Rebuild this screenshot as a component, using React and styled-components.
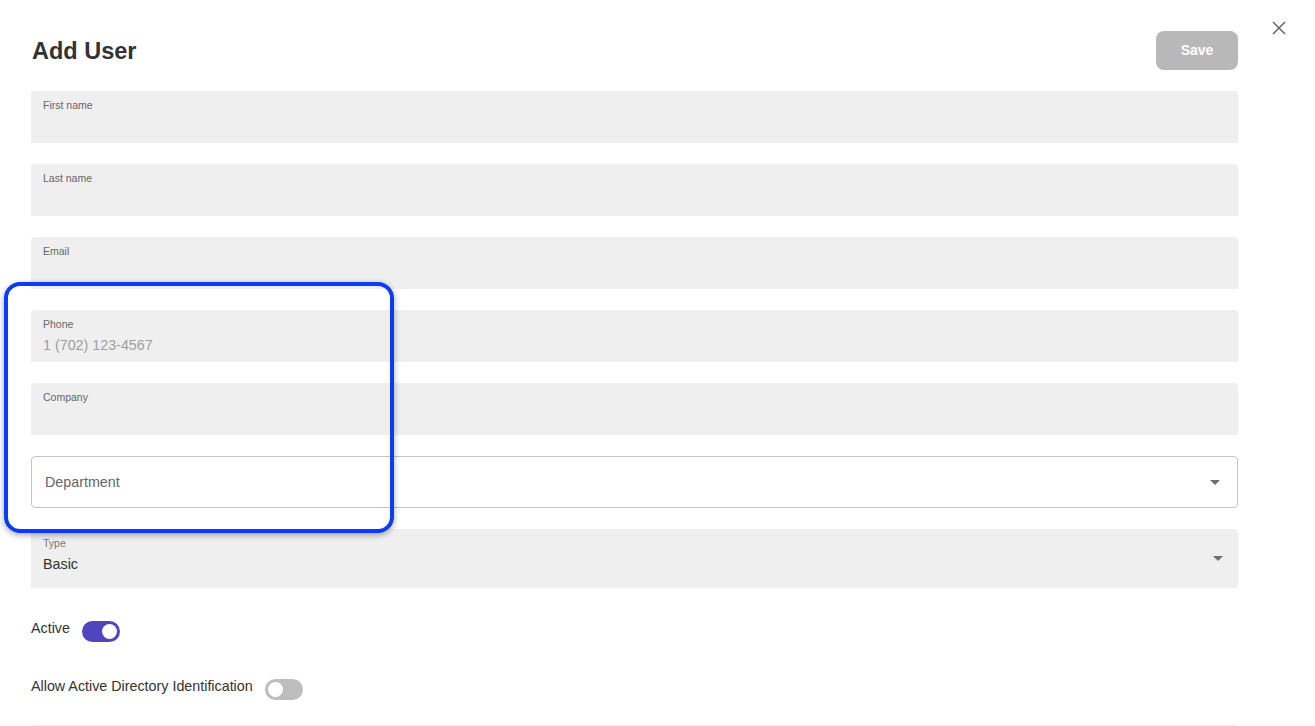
import React, { useState } from 'react'
import styled, { createGlobalStyle } from 'styled-components'

const GlobalStyle = createGlobalStyle`
  body {
    margin: 0;
    background: #fff;
    font-family: "Liberation Sans", Arial, sans-serif;
    color: #333;
  }
`

const fields = [
  { label: 'First name' },
  { label: 'Last name' },
  { label: 'Email' },
  { label: 'Phone', placeholder: '1 (702) 123-4567' },
  { label: 'Company' },
]

export default function App() {
  const [active, setActive] = useState(true)
  const [adAllowed, setAdAllowed] = useState(false)

  return (
    <>
      <GlobalStyle />
      <PageStyled>
        <FormStyled>
          <HeaderStyled>
            <TitleStyled>Add User</TitleStyled>
            <SaveButton disabled>Save</SaveButton>
          </HeaderStyled>
          <FieldListStyled>
            {fields.map((field) => (
              <FilledField key={field.label}>
                <FieldLabel>{field.label}</FieldLabel>
                <FieldValue $placeholder={!!field.placeholder}>
                  {field.placeholder || ''}
                </FieldValue>
              </FilledField>
            ))}
            <OutlinedSelect>
              <span>Department</span>
              <Caret />
            </OutlinedSelect>
            <FilledSelect>
              <SelectText>
                <SelectLabel>Type</SelectLabel>
                <SelectValue>Basic</SelectValue>
              </SelectText>
              <Caret />
            </FilledSelect>
          </FieldListStyled>
          <ToggleRow $top={33}>
            <ToggleText>Active</ToggleText>
            <Toggle $on={active} onClick={() => setActive(!active)} />
          </ToggleRow>
          <ToggleRow $top={37}>
            <ToggleText>Allow Active Directory Identification</ToggleText>
            <Toggle $on={adAllowed} onClick={() => setAdAllowed(!adAllowed)} />
          </ToggleRow>
          <Divider />
        </FormStyled>
        <CloseButton aria-label="Close">
          <svg width="14" height="14" viewBox="0 0 14 14">
            <path d="M1 1 L13 13 M13 1 L1 13" stroke="#6b6b6b" strokeWidth="1.6" />
          </svg>
        </CloseButton>
        <Highlight />
      </PageStyled>
    </>
  )
}

function Caret() {
  return (
    <svg width="10" height="5" viewBox="0 0 10 5">
      <path d="M0 0 L10 0 L5 5 Z" fill="#6e6e6e" />
    </svg>
  )
}

const PageStyled = styled.div`
  position: relative;
  display: flex;
  align-items: flex-start;
  padding-left: 31px;
  width: 1315px;
  height: 726px;
  box-sizing: border-box;
  overflow: hidden;
`

const FormStyled = styled.div`
  width: 1207px;
  padding-top: 31px;
`

const HeaderStyled = styled.div`
  display: flex;
  justify-content: space-between;
  align-items: center;
  height: 39px;
  margin-bottom: 21px;
`

const TitleStyled = styled.h1`
  margin: 2px 0 0 1px;
  font-size: 23.5px;
  font-weight: bold;
  color: #333;
`

const SaveButton = styled.button`
  width: 82px;
  height: 39px;
  border: none;
  border-radius: 8px;
  background: #b8b8b8;
  color: #fff;
  font-family: inherit;
  font-size: 14px;
  font-weight: bold;
  padding-bottom: 2px;
`

const FieldListStyled = styled.div`
  display: flex;
  flex-direction: column;
  gap: 21px;
`

const FilledField = styled.div`
  height: 52px;
  box-sizing: border-box;
  padding: 8px 12px 0;
  background: #efefef;
  border-radius: 4px 4px 0 0;
`

const FieldLabel = styled.div`
  font-size: 10.5px;
  line-height: 13px;
  color: #666;
`

const FieldValue = styled.div`
  margin-top: 5px;
  font-size: 14.3px;
  line-height: 18px;
  color: ${(p) => (p.$placeholder ? '#9e9e9e' : '#333')};
`

const OutlinedSelect = styled.div`
  height: 52px;
  box-sizing: border-box;
  display: flex;
  align-items: center;
  justify-content: space-between;
  padding: 0 17px 0 13px;
  border: 1px solid #c4c4c4;
  border-radius: 4px;
  font-size: 14.3px;
  color: #666;
`

const FilledSelect = styled.div`
  height: 59px;
  box-sizing: border-box;
  display: flex;
  align-items: center;
  justify-content: space-between;
  padding: 0 15px 0 12px;
  background: #efefef;
  border-radius: 4px 4px 0 0;
`

const SelectText = styled.div`
  align-self: flex-start;
  padding-top: 8px;
`

const SelectLabel = styled.div`
  font-size: 10.5px;
  line-height: 13px;
  color: #777;
`

const SelectValue = styled.div`
  margin-top: 5px;
  font-size: 14.3px;
  line-height: 18px;
  color: #333;
`

const ToggleRow = styled.div`
  display: flex;
  align-items: flex-start;
  gap: 12px;
  margin-top: ${(p) => p.$top}px;
`

const ToggleText = styled.span`
  font-size: 14.3px;
  line-height: 15px;
  color: #333;
`

const Toggle = styled.button`
  position: relative;
  width: 38px;
  height: 21px;
  padding: 0;
  border: none;
  border-radius: 11px;
  background: ${(p) => (p.$on ? '#5045be' : '#bdbdbd')};
  cursor: pointer;

  &::after {
    content: '';
    position: absolute;
    top: 3px;
    left: ${(p) => (p.$on ? '20px' : '3px')};
    width: 15px;
    height: 15px;
    border-radius: 50%;
    background: #fff;
  }
`

const Divider = styled.div`
  margin-top: 25px;
  margin-left: 2px;
  width: 1203px;
  height: 1px;
  background: #ececec;
`

const CloseButton = styled.button`
  margin: 21px 0 0 34px;
  padding: 0;
  border: none;
  background: none;
  width: 14px;
  height: 14px;
  display: flex;
`

const Highlight = styled.div`
  position: absolute;
  left: 4px;
  top: 282px;
  width: 390px;
  height: 251px;
  box-sizing: border-box;
  border: 4px solid #0a3cf5;
  border-radius: 16px;
  box-shadow: 0 2px 6px rgba(0, 0, 0, 0.35);
  pointer-events: none;
`
